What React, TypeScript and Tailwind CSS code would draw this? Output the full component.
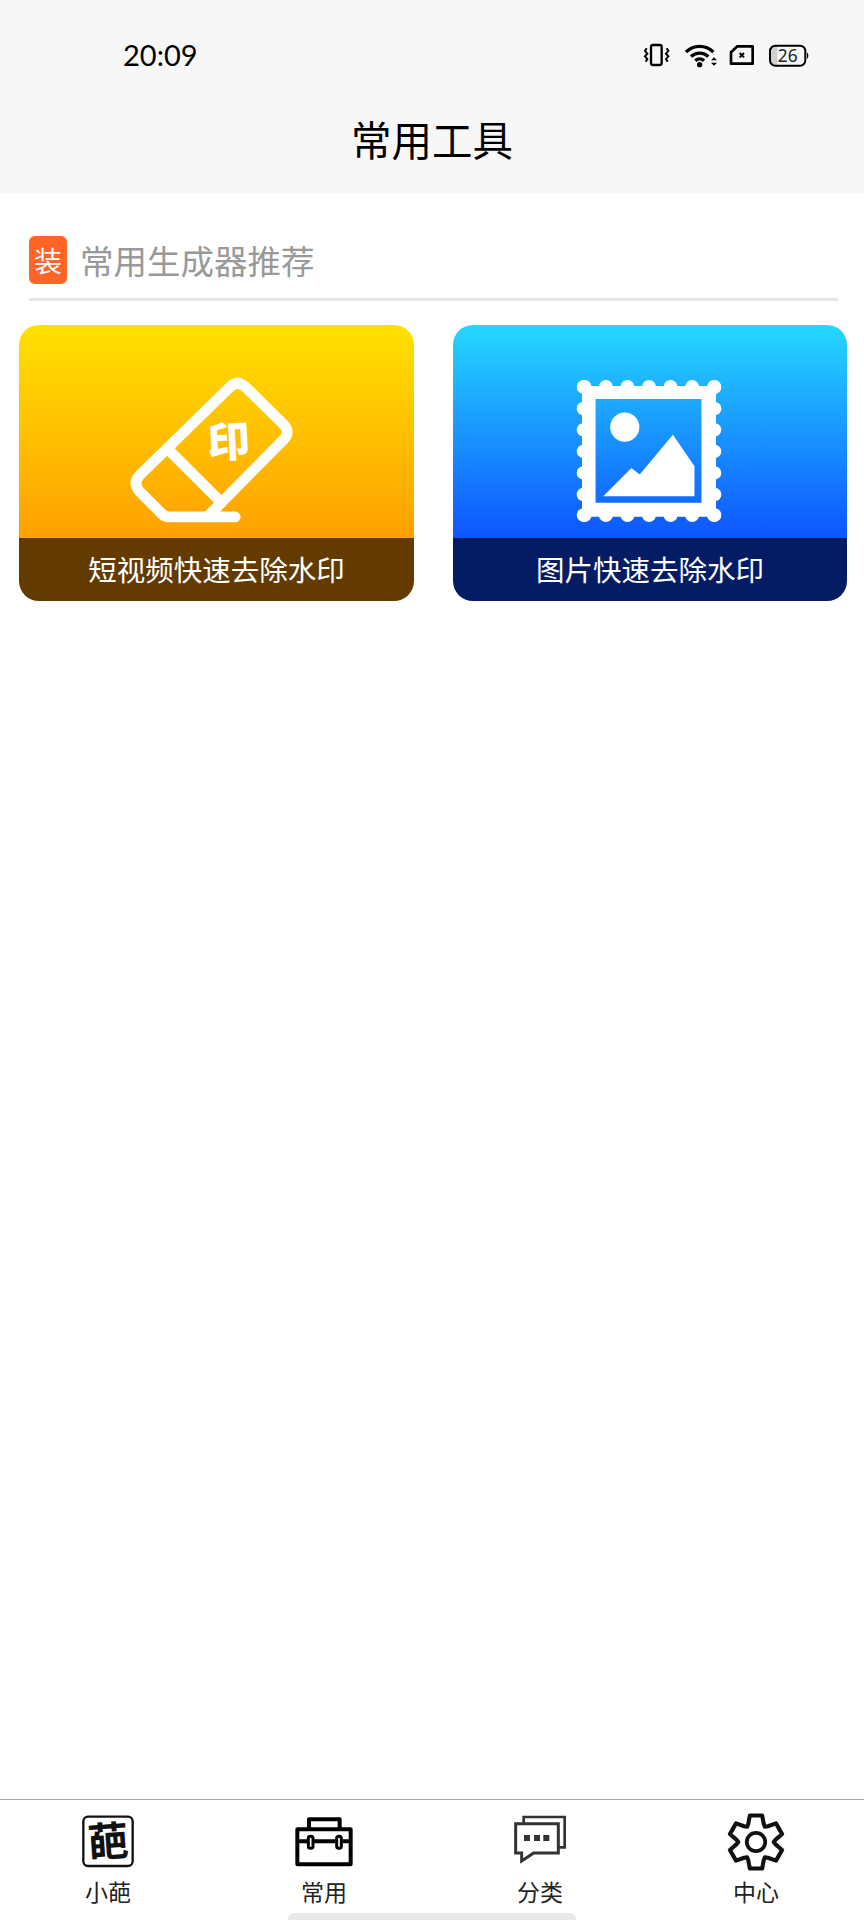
import React from 'react';

const cjk = "'Noto Sans CJK SC', sans-serif";

// gear outline, six flat teeth around a centre
const polar = (r: number, deg: number) => {
  const a = (deg * Math.PI) / 180;
  return `${(85 + r * Math.cos(a)).toFixed(1)},${(85 + r * Math.sin(a)).toFixed(1)}`;
};
const gearPoints = [0, 1, 2, 3, 4, 5]
  .flatMap((k) => {
    const c = k * 60 - 90;
    return [polar(58, c - 23), polar(80, c - 13), polar(80, c + 13), polar(58, c + 23), polar(52, c + 30)];
  })
  .join(' ');

const StatusIcons = () => (
  <svg width="190" height="50" viewBox="0 0 570 150" className="mr-[44px]" aria-hidden>
    {/* vibrate */}
    <rect x="63" y="45" width="32" height="60" rx="6" fill="none" stroke="#000" strokeWidth="7" />
    <path d="M50 55l-5 8 7 8-7 8 7 8-5 8M110 55l5 8-7 8 7 8-7 8 5 8" fill="none" stroke="#000" strokeWidth="6" />
    {/* wifi */}
    <path d="M168 66a58 58 0 0 1 82 0M183 80a37 37 0 0 1 52 0M196 92a19 19 0 0 1 26 0" fill="none" stroke="#000" strokeWidth="10" />
    <circle cx="209" cy="104" r="8" fill="#000" />
    <path d="M243 91l9-9 9 9zM243 98l9 9 9-9z" fill="#000" />
    {/* sim */}
    <path d="M303 67l19-18h46v52h-65z" fill="none" stroke="#000" strokeWidth="8" strokeLinejoin="round" />
    <path d="M329 69l13 13M342 69l-13 13" stroke="#000" strokeWidth="6" />
    {/* battery */}
    <path d="M442 47h-10a12 12 0 0 0-12 12v34a12 12 0 0 0 12 12h10z" fill="#cfcfcf" />
    <rect x="420" y="47" width="106" height="60" rx="16" fill="none" stroke="#000" strokeWidth="6" />
    <path d="M531 67a14 14 0 0 1 0 20z" fill="#000" />
    <text x="473" y="95" textAnchor="middle" fontSize="52" fontFamily="'Noto Sans', sans-serif" fill="#222">26</text>
  </svg>
);

const EraserIcon = () => (
  <svg width="167" height="149" viewBox="390 200 500 446" aria-hidden>
    <path
      d="M705 622H505Q495 622 485 612L418 545Q398 520 418 498L690 232Q712 212 735 232L850 345Q872 367 850 390L625 618M510 425L650 565"
      fill="none"
      stroke="#fff"
      strokeWidth="32"
      strokeLinecap="round"
      strokeLinejoin="round"
    />
    <text x="686" y="443" textAnchor="middle" fontSize="128" fontWeight="900" fontFamily={cjk} fill="#fff" transform="rotate(-3 686 395)">印</text>
  </svg>
);

const StampIcon = () => {
  const steps = [231, 296, 360, 425, 490, 555, 617];
  const across = [456, 520, 585, 650, 715, 780, 846];
  return (
    <svg width="146" height="144" viewBox="430 208 440 432" aria-hidden>
      <path d="M448 228H852V622H448ZM489 267V580H808V267Z" fill="#fff" fillRule="evenodd" />
      {across.map((x) => (
        <React.Fragment key={x}>
          <circle cx={x} cy="231" r="21" fill="#fff" />
          <circle cx={x} cy="617" r="21" fill="#fff" />
        </React.Fragment>
      ))}
      {steps.map((y) => (
        <React.Fragment key={y}>
          <circle cx="452" cy={y} r="20" fill="#fff" />
          <circle cx="848" cy={y} r="20" fill="#fff" />
        </React.Fragment>
      ))}
      <circle cx="577" cy="352" r="44" fill="#fff" />
      <path d="M512 560L597 475L622 495L722 375L787 470V560Z" fill="#fff" />
    </svg>
  );
};

const Card = ({ grad, bar, pad, icon, label }: { grad: string; bar: string; pad: string; icon: React.ReactNode; label: string }) => (
  <div className="h-[276px] rounded-[20px] overflow-hidden flex flex-col">
    <div className={`flex-1 flex items-end justify-center ${grad} ${pad}`}>{icon}</div>
    <div className={`h-[63px] flex items-center justify-center text-white text-[28.5px] ${bar}`}>{label}</div>
  </div>
);

const tabs = [
  {
    label: '小葩',
    icon: (
      <svg width="58" height="58" viewBox="237 72 174 174" className="overflow-visible" aria-hidden>
        <rect x="250" y="83" width="148" height="148" rx="14" fill="none" stroke="#111" strokeWidth="7" />
        <text x="324" y="202" textAnchor="middle" fontSize="122" fontWeight="700" fontFamily={cjk} fill="#111" transform="rotate(-4 324 157)">葩</text>
      </svg>
    ),
  },
  {
    label: '常用',
    icon: (
      <svg width="58" height="58" viewBox="884 72 174 174" aria-hidden>
        <path d="M891 121H1051V226H891ZM926 121V91H1018V121M891 157H920M940 157H1005M1027 157H1051" fill="none" stroke="#000" strokeWidth="12" strokeLinejoin="round" />
        <rect x="924" y="142" width="14" height="36" rx="6" fill="none" stroke="#000" strokeWidth="9" />
        <rect x="1009" y="142" width="14" height="36" rx="6" fill="none" stroke="#000" strokeWidth="9" />
      </svg>
    ),
  },
  {
    label: '分类',
    icon: (
      <svg width="58" height="58" viewBox="237 72 174 174" aria-hidden>
        <path d="M275 102V84H398V175H381" fill="none" stroke="#333" strokeWidth="8" />
        <path d="M251 104H379V192H305L269 216V192H251Z" fill="none" stroke="#333" strokeWidth="9" />
        <rect x="276" y="138" width="18" height="18" fill="#333" />
        <rect x="306" y="138" width="18" height="18" fill="#333" />
        <rect x="334" y="138" width="18" height="18" fill="#333" />
      </svg>
    ),
  },
  {
    label: '中心',
    icon: (
      <svg width="58" height="58" viewBox="0 0 170 170" aria-hidden>
        <polygon points={gearPoints} fill="none" stroke="#111" strokeWidth="12" strokeLinejoin="round" />
        <circle cx="85" cy="85" r="27" fill="none" stroke="#111" strokeWidth="11" />
      </svg>
    ),
  },
];

export default function App() {
  return (
    <div className="relative w-[864px] h-[1920px] bg-white flex flex-col overflow-hidden" style={{ fontFamily: cjk }}>
      {/* Status bar and title */}
      <header className="h-[193px] bg-[#f7f7f7] shrink-0">
        <div className="h-[110px] flex items-center justify-between pl-[123px]">
          <span className="text-[29px] text-black font-['Lato',sans-serif]">20:09</span>
          <StatusIcons />
        </div>
        <h1 className="h-[58px] flex items-center justify-center text-[40.5px] font-normal text-black">常用工具</h1>
      </header>

      <main className="flex-1">
        <div className="mt-[43px] ml-[29px] mr-[26px] pb-[14px] border-b-[3px] border-[#e6e6e6] flex items-center gap-[13px]">
          <span className="w-[38px] h-[48px] rounded-md bg-[#ff6427] text-white text-[28px] leading-none flex items-center justify-center">装</span>
          <span className="text-[33.5px] leading-none text-[#999999]">常用生成器推荐</span>
        </div>

        <div className="mt-[24px] ml-[19px] w-[828px] grid grid-cols-[395px_394px] gap-[39px]">
          <Card
            grad="bg-linear-to-b/srgb from-[#ffe100] to-[#ffa000]"
            bar="bg-[#633b00]"
            pad="pb-[13px] pr-[6px]"
            icon={<EraserIcon />}
            label="短视频快速去除水印"
          />
          <Card
            grad="bg-linear-to-b/srgb from-[#25d8ff] to-[#0d55ff]"
            bar="bg-[#031c63]"
            pad="pb-[15px] pr-[3px]"
            icon={<StampIcon />}
            label="图片快速去除水印"
          />
        </div>
      </main>

      {/* Bottom tabs */}
      <nav className="h-[121px] shrink-0 border-t border-[#aaaaaa] grid grid-cols-4">
        {tabs.map((t) => (
          <div key={t.label} className="flex flex-col items-center pt-[13px]">
            {t.icon}
            <span className="text-[23px] leading-[30px] mt-[5px] text-[#222222]">{t.label}</span>
          </div>
        ))}
      </nav>

      {/* Gesture pill sits over the tab bar */}
      <div className="absolute bottom-0 left-[288px] w-[288px] h-[7px] bg-[#e8e8e8] rounded-t-md" />
    </div>
  );
}
